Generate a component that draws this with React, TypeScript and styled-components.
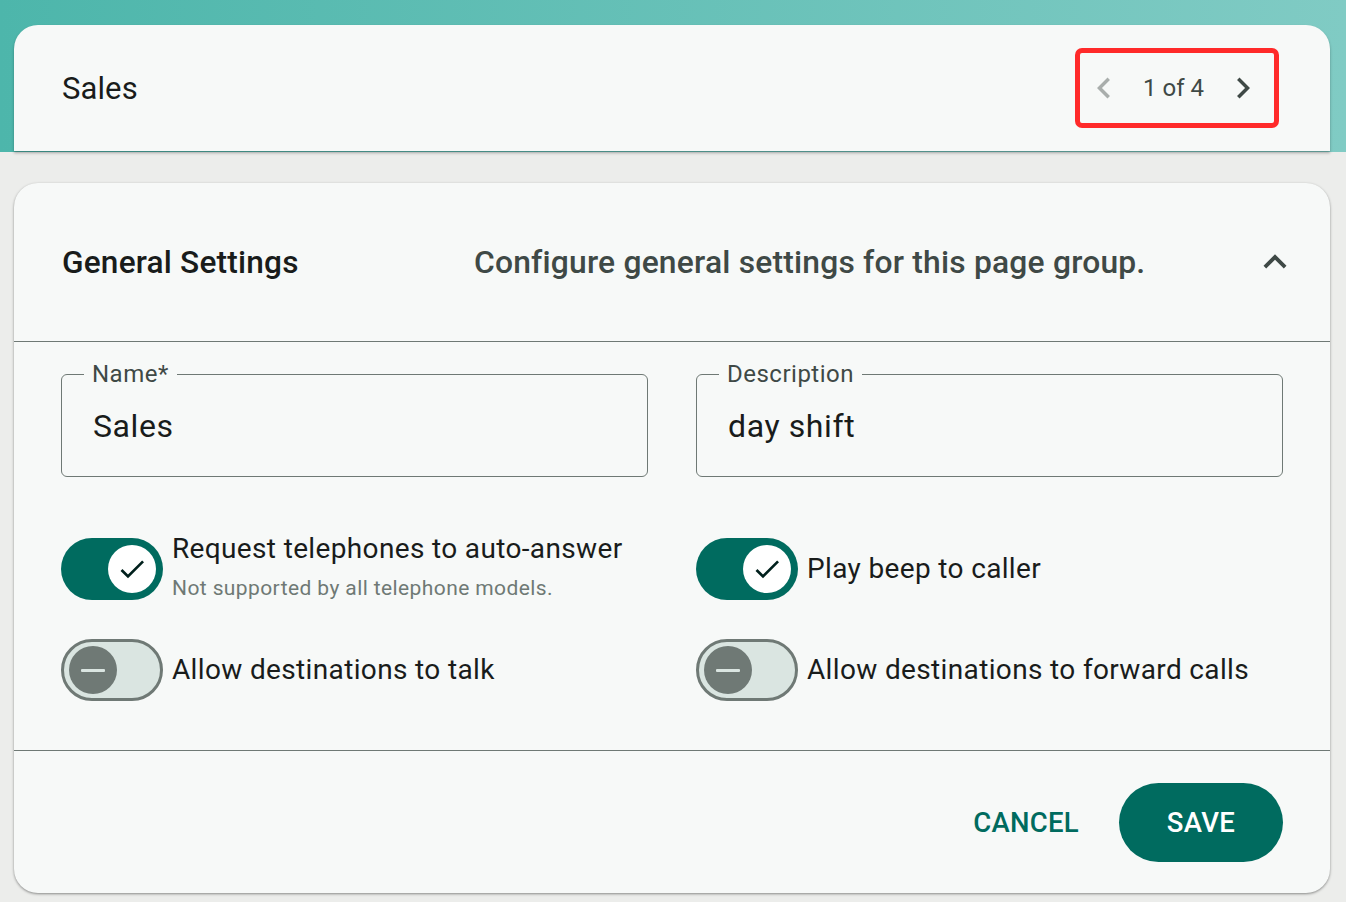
import React from "react";
import styled, { createGlobalStyle } from "styled-components";

const GlobalStyle = createGlobalStyle`
  body {
    margin: 0;
    background: #ecedeb;
    font-family: Roboto, "Noto Sans", sans-serif;
    color: #191c1b;
  }
`;

const Page = styled.div`
  width: 1346px;
  height: 902px;
  box-sizing: border-box;
  padding: 25px 16px 0 14px;
  background: linear-gradient(90deg, #4db6ab 0%, #80cbc4 100%) top left / 100% 152px no-repeat,
    #ecedeb;
`;

const TopBar = styled.div`
  height: 126px;
  box-sizing: border-box;
  display: flex;
  align-items: center;
  justify-content: space-between;
  padding: 0 51px 0 48px;
  background: #f7f9f8;
  border-radius: 24px 24px 0 0;
  box-shadow: 0 2px 3px rgba(0, 0, 0, 0.3);
`;

const PageTitle = styled.div`
  font-size: 31px;
  letter-spacing: 0.1px;
`;

const Pager = styled.div`
  width: 204px;
  height: 80px;
  box-sizing: border-box;
  border: 5px solid #ff2a2a;
  border-radius: 7px;
  display: flex;
  align-items: center;
  justify-content: space-between;
  padding: 0 10px 0 3px;
`;

const PagerText = styled.span`
  font-size: 24px;
  color: #3f4946;
`;

const IconButton = styled.button<{ $muted?: boolean }>`
  border: 0;
  background: none;
  padding: 0;
  display: flex;
  color: ${(p) => (p.$muted ? "#a9aeac" : "#3f4946")};
`;

const Card = styled.div`
  margin-top: 32px;
  background: #f7f9f8;
  border-radius: 24px;
  box-shadow: 0 1px 3px rgba(0, 0, 0, 0.3), 0 1px 2px rgba(0, 0, 0, 0.15);
  overflow: hidden;
`;

const CardHeader = styled.div`
  height: 158px;
  display: flex;
  align-items: center;
  padding: 0 32px 0 48px;
`;

const SectionTitle = styled.div`
  width: 412px;
  font-size: 31.6px;
  font-weight: 500;
  letter-spacing: 0.2px;
`;

const SectionDesc = styled.div`
  flex: 1;
  font-size: 31.8px;
  font-weight: 500;
  letter-spacing: 0.2px;
  color: #3f4946;
`;

const Divider = styled.div`
  height: 1px;
  background: #6f7975;
`;

const Body = styled.div`
  padding: 32px 47px 49px 47px;
`;

const Grid = styled.div<{ $rowGap?: number }>`
  display: grid;
  grid-template-columns: 1fr 1fr;
  column-gap: 48px;
  row-gap: ${(p) => p.$rowGap ?? 0}px;
  align-items: center;
`;

const FieldBox = styled.div`
  position: relative;
  height: 103px;
  box-sizing: border-box;
  border: 1px solid #6f7975;
  border-radius: 6px;
  display: flex;
  align-items: center;
  padding-left: 31px;
`;

const FieldLabel = styled.span`
  position: absolute;
  top: -16px;
  left: 22px;
  padding: 0 8px;
  background: #f7f9f8;
  font-size: 24px;
  line-height: 30px;
  letter-spacing: 0.5px;
  color: #3f4946;
`;

const FieldValue = styled.span`
  font-size: 32px;
  letter-spacing: 0.6px;
  color: #191c1b;
`;

const Switches = styled(Grid)`
  margin-top: 57px;
`;

const SwitchRow = styled.label`
  display: flex;
  align-items: center;
  gap: 9px;
`;

const Track = styled.span<{ $on: boolean }>`
  flex: none;
  width: 102px;
  height: 62px;
  box-sizing: border-box;
  border-radius: 31px;
  display: flex;
  align-items: center;
  justify-content: ${(p) => (p.$on ? "flex-end" : "flex-start")};
  padding: 0 ${(p) => (p.$on ? "7px" : "5px")};
  background: ${(p) => (p.$on ? "#006b5f" : "#dae5e1")};
  border: ${(p) => (p.$on ? "0" : "3px solid #6f7975")};
`;

const Thumb = styled.span<{ $on: boolean }>`
  width: 48px;
  height: 48px;
  border-radius: 50%;
  display: flex;
  align-items: center;
  justify-content: center;
  background: ${(p) => (p.$on ? "#ffffff" : "#6f7975")};
  color: ${(p) => (p.$on ? "#00201c" : "#dae5e1")};
`;

const Minus = styled.span`
  width: 24px;
  height: 3px;
  border-radius: 1px;
  background: #dae5e1;
`;

const SwitchText = styled.span<{ $hasHint: boolean }>`
  display: flex;
  flex-direction: column;
  gap: 4px;
  margin-top: ${(p) => (p.$hasHint ? "-4px" : "0")};
`;

const SwitchLabel = styled.span`
  font-size: 28px;
  line-height: 38px;
  letter-spacing: 0.35px;
`;

const SwitchHint = styled.span`
  font-size: 21px;
  line-height: 32px;
  letter-spacing: 0.4px;
  color: #6f7975;
`;

const Footer = styled.div`
  height: 142px;
  display: flex;
  align-items: center;
  justify-content: flex-end;
  gap: 16px;
  padding-right: 47px;
`;

const TextButton = styled.button`
  border: 0;
  background: none;
  height: 79px;
  padding: 0 24px;
  font-family: inherit;
  font-size: 27.5px;
  font-weight: 500;
  letter-spacing: 0.3px;
  color: #006b5f;
`;

const FilledButton = styled(TextButton)`
  width: 164px;
  border-radius: 40px;
  background: #006b5f;
  color: #ffffff;
`;

const Icon = ({ d, size }: { d: string; size: number }) => (
  <svg width={size} height={size} viewBox="0 0 24 24" fill="currentColor">
    <path d={d} />
  </svg>
);

const CHEVRON_LEFT = "M15.41 7.41L14 6l-6 6 6 6 1.41-1.41L10.83 12z";
const CHEVRON_RIGHT = "M10 6L8.59 7.41 13.17 12l-4.58 4.59L10 18l6-6z";
const EXPAND_LESS = "M12 8l-6 6 1.41 1.41L12 10.83l4.59 4.58L18 14z";
const CHECK = "M9 16.17L4.83 12l-1.42 1.41L9 19 21 7l-1.41-1.41z";

const Switch = ({ on }: { on: boolean }) => (
  <Track $on={on}>
    <Thumb $on={on}>{on ? <Icon d={CHECK} size={32} /> : <Minus />}</Thumb>
  </Track>
);

const settings = [
  { label: "Request telephones to auto-answer", hint: "Not supported by all telephone models.", on: true },
  { label: "Play beep to caller", on: true },
  { label: "Allow destinations to talk", on: false },
  { label: "Allow destinations to forward calls", on: false },
];

export default function App() {
  return (
    <Page>
      <GlobalStyle />
      <TopBar>
        <PageTitle>Sales</PageTitle>
        <Pager>
          <IconButton $muted>
            <Icon d={CHEVRON_LEFT} size={42} />
          </IconButton>
          <PagerText>1 of 4</PagerText>
          <IconButton>
            <Icon d={CHEVRON_RIGHT} size={42} />
          </IconButton>
        </Pager>
      </TopBar>

      <Card>
        <CardHeader>
          <SectionTitle>General Settings</SectionTitle>
          <SectionDesc>Configure general settings for this page group.</SectionDesc>
          <IconButton>
            <Icon d={EXPAND_LESS} size={46} />
          </IconButton>
        </CardHeader>
        <Divider />
        <Body>
          <Grid>
            <FieldBox>
              <FieldLabel>Name*</FieldLabel>
              <FieldValue>Sales</FieldValue>
            </FieldBox>
            <FieldBox>
              <FieldLabel>Description</FieldLabel>
              <FieldValue>day shift</FieldValue>
            </FieldBox>
          </Grid>
          <Switches $rowGap={35}>
            {settings.map((s) => (
              <SwitchRow key={s.label}>
                <Switch on={s.on} />
                <SwitchText $hasHint={!!s.hint}>
                  <SwitchLabel>{s.label}</SwitchLabel>
                  {s.hint && <SwitchHint>{s.hint}</SwitchHint>}
                </SwitchText>
              </SwitchRow>
            ))}
          </Switches>
        </Body>
        <Divider />
        <Footer>
          <TextButton>CANCEL</TextButton>
          <FilledButton>SAVE</FilledButton>
        </Footer>
      </Card>
    </Page>
  );
}
